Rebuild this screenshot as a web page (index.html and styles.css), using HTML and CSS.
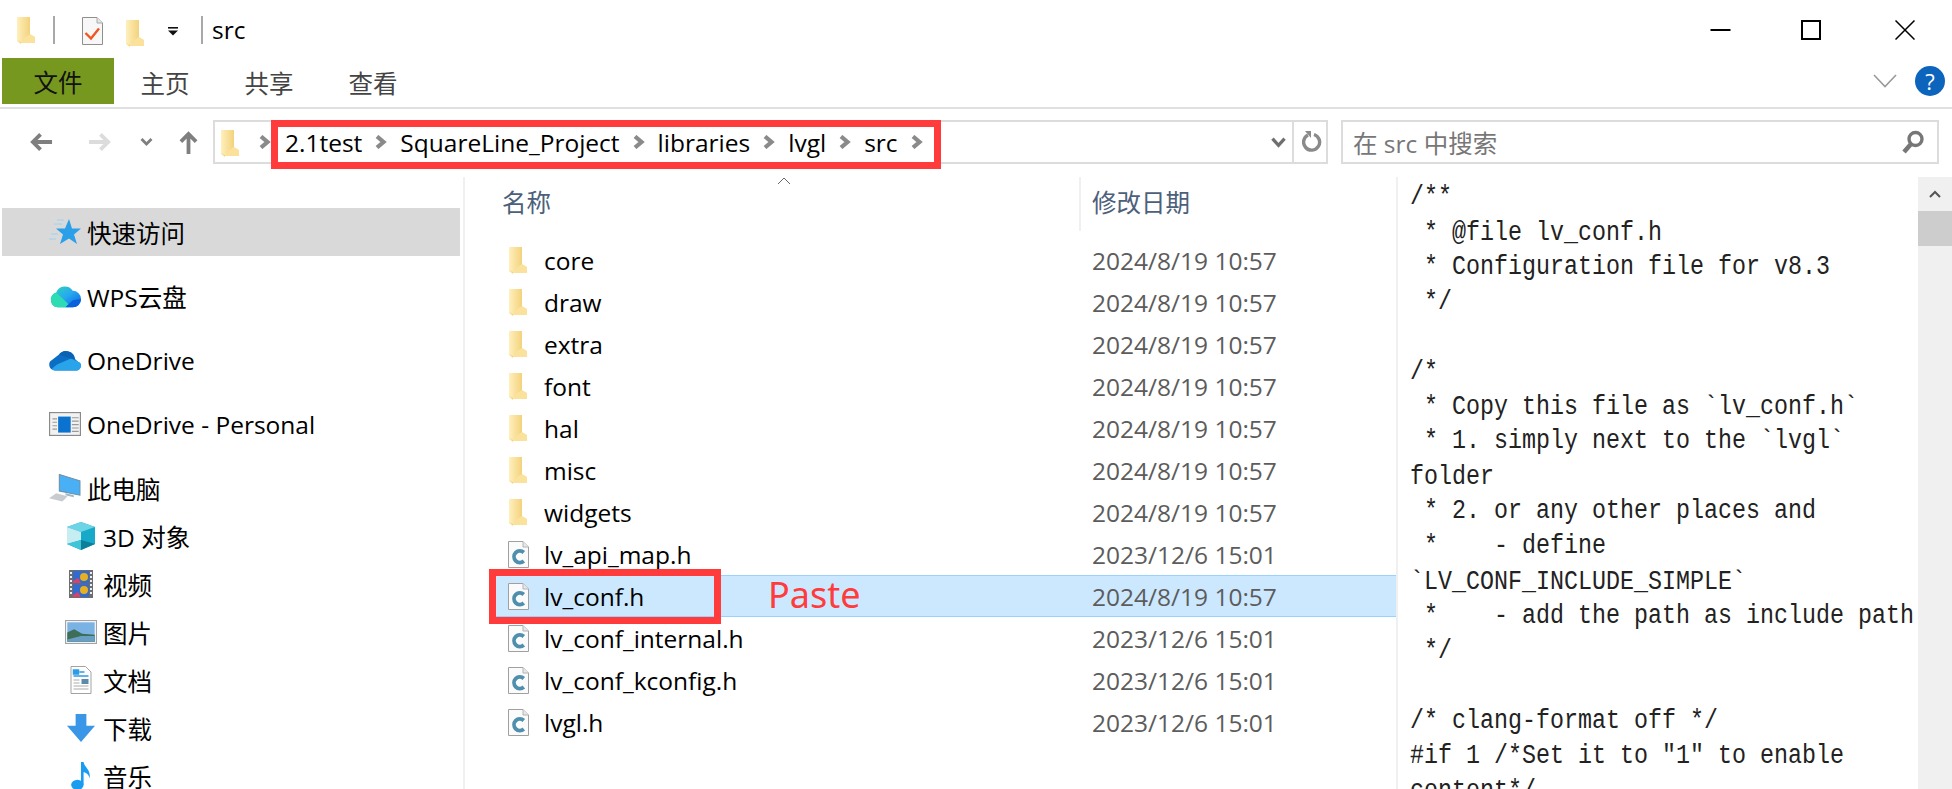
FILE: index.html
```html
<!DOCTYPE html>
<html lang="zh">
<head>
<meta charset="utf-8">
<title>src</title>
<link rel="stylesheet" href="styles.css">
</head>
<body>
<svg class="defs" width="0" height="0" aria-hidden="true">
  <defs>
    <linearGradient id="fg" x1="0" y1="0" x2="1" y2="1">
      <stop offset="0" stop-color="#f5d67e"/><stop offset="1" stop-color="#fde9a8"/>
    </linearGradient>
    <linearGradient id="fl" x1="0" y1="0" x2="1" y2="0">
      <stop offset="0" stop-color="#fff0bd"/><stop offset="1" stop-color="#f3d27c"/>
    </linearGradient>
    <linearGradient id="wps" x1="0" y1="0" x2="1" y2="1">
      <stop offset="0" stop-color="#2fd9b0"/><stop offset="0.5" stop-color="#27a8f0"/><stop offset="1" stop-color="#0a5fdc"/>
    </linearGradient>
    <symbol id="folder" viewBox="0 0 18 27">
      <path d="M0 0H12L13 2V18L18 20V26H4L0 24Z" fill="url(#fg)"/>
      <path d="M0 1L4 5V27L0 24Z" fill="url(#fl)"/>
      <path d="M4 6L12 1V20H18V26H4Z" fill="#f5d988"/>
      <path d="M0 0H13V18L5 22V26L0 22Z" fill="url(#fl)"/>
      <path d="M13 17L18 20V26H5V22Z" fill="#fae29c"/>
    </symbol>
    <symbol id="cfile" viewBox="0 0 21 27">
      <path d="M.5.5H15L20.500 6V26.500H.5Z" fill="#fbfbfb" stroke="#a0a0a0"/>
      <path d="M15 .5V6H20.500" fill="#e8e8e8" stroke="#b4b4b4"/>
      <path d="M15.800 11.500A5.800 5.800 0 1 0 15.800 20" fill="none" stroke="#4f8fae" stroke-width="3.800"/>
    </symbol>
    <symbol id="chev" viewBox="0 0 12 14">
      <path d="M2 1.500L8.500 7L2 12.500" fill="none" stroke="#8a8a8a" stroke-width="4.200"/>
    </symbol>
  </defs>
</svg>

<div class="app">
  <header class="titlebar">
    <div class="qat">
      <svg class="ico-folder qat-first"><use href="#folder"/></svg>
      <span class="vsep sep-a"></span>
      <svg class="qat-doc" viewBox="0 0 21 28"><path d="M.5.5H15L20.500 6V27.500H.5Z" fill="#f7f7f7" stroke="#8f8f8f"/><path d="M15 .5V6H20.500" fill="#e6e6e6" stroke="#aaa"/><path d="M3.500 16L9 21.500L17 11.500" fill="none" stroke="#f0561d" stroke-width="2.400"/></svg>
      <svg class="ico-folder qat-second"><use href="#folder"/></svg>
      <svg class="qat-drop" viewBox="0 0 12 9"><rect x="1" y="0" width="10" height="1.600" fill="#111"/><path d="M1 3.500H11L6 8.500Z" fill="#111"/></svg>
      <span class="vsep sep-b"></span>
      <span class="title">src</span>
    </div>
    <div class="winbtns">
      <svg class="win-min" viewBox="0 0 20 4"><rect width="20" height="2" y="1" fill="#000"/></svg>
      <svg class="win-max" viewBox="0 0 20 20"><rect x="1" y="1" width="18" height="18" fill="none" stroke="#000" stroke-width="2"/></svg>
      <svg class="win-close" viewBox="0 0 20 20"><path d="M.5.5L19.500 19.500M19.500.5L.5 19.500" stroke="#000" stroke-width="1.500"/></svg>
    </div>
  </header>

  <nav class="ribbon">
    <span class="tab tab-file">文件</span>
    <span class="tab">主页</span>
    <span class="tab">共享</span>
    <span class="tab">查看</span>
    <span class="ribbon-right">
      <svg class="rib-chev" viewBox="0 0 24 14"><path d="M1 1L12 12.500L23 1" fill="none" stroke="#9a9a9a" stroke-width="1.600"/></svg>
      <span class="help">?</span>
    </span>
  </nav>

  <div class="addr-row">
    <div class="nav-btns">
      <svg class="nav-arrow" viewBox="0 0 24 20"><path d="M11 2L3 10L11 18M3 10H23" fill="none" stroke="#7f7f7f" stroke-width="4"/></svg>
      <svg class="nav-arrow nav-fwd" viewBox="0 0 24 20"><path d="M13 2L21 10L13 18M21 10H1" fill="none" stroke="#dcdcdc" stroke-width="4"/></svg>
      <svg class="nav-down" viewBox="0 0 12 8"><path d="M1 1L6 6L11 1" fill="none" stroke="#7f7f7f" stroke-width="2.800"/></svg>
      <svg class="nav-up" viewBox="0 0 20 24"><path d="M2 11L10 3L18 11M10 3V24" fill="none" stroke="#7f7f7f" stroke-width="4"/></svg>
    </div>
    <div class="addr">
      <svg class="ico-folder addr-folder"><use href="#folder"/></svg>
      <svg class="crumb-chev crumb-first"><use href="#chev"/></svg>
      <span class="crumb">2.1test</span><svg class="crumb-chev"><use href="#chev"/></svg>
      <span class="crumb">SquareLine_Project</span><svg class="crumb-chev"><use href="#chev"/></svg>
      <span class="crumb">libraries</span><svg class="crumb-chev"><use href="#chev"/></svg>
      <span class="crumb">lvgl</span><svg class="crumb-chev"><use href="#chev"/></svg>
      <span class="crumb">src</span><svg class="crumb-chev"><use href="#chev"/></svg>
      <span class="addr-end">
        <svg class="addr-down" viewBox="0 0 14 10"><path d="M1.500 1.500L7 7.500L12.500 1.500" fill="none" stroke="#6f6f6f" stroke-width="3"/></svg>
        <span class="addr-refresh">
          <svg viewBox="0 0 20 24"><path d="M12 4.500A8 8 0 1 1 6 5" fill="none" stroke="#8a8a8a" stroke-width="3.400"/><path d="M3 1H9V8Z" fill="#8a8a8a"/></svg>
        </span>
      </span>
    </div>
    <div class="search">
      <span class="search-text">在 src 中搜索</span>
      <svg class="search-ico" viewBox="0 0 24 24"><circle cx="14.500" cy="9" r="6.500" fill="none" stroke="#777" stroke-width="3.400"/><path d="M10 14L3 22" stroke="#777" stroke-width="4.500"/></svg>
    </div>
  </div>

  <main class="main">
    <aside class="sidebar">
      <div class="nav-item selected">
        <span class="nav-ico"><svg viewBox="0 0 32 26"><path d="M20 0L23 9.500L32 9.500L25 15.500L28 25L20 19.500L11 25L14 15.500L7 9.500L16 9.500Z" fill="#2b9fe8"/><path d="M0 20H7M2 15H9M5 5H13M8 1H15" stroke="#9bd2f4" stroke-width="1"/></svg></span>快速访问
      </div>
      <div class="nav-item">
        <span class="nav-ico"><svg viewBox="0 0 31 22"><path d="M8 22A7.500 7.500 0 0 1 7 7.500A9 9 0 0 1 23 6A8 8 0 0 1 31 14A8 8 0 0 1 23 22Z" fill="url(#wps)"/><path d="M7 7.500L19 19L16 22H8A7.500 7.500 0 0 1 7 7.500Z" fill="#2edcb4"/><path d="M16 22L23 15L31 14A8 8 0 0 1 23 22Z" fill="#0a5fdc"/></svg></span>WPS云盘
      </div>
      <div class="nav-item">
        <span class="nav-ico"><svg viewBox="0 0 32 21"><path d="M6 21A6 6 0 0 1 1 12L10 5A9 9 0 0 1 26 9.500L32 15A6 6 0 0 1 28 21Z" fill="#0b6ec4"/><path d="M6 21H28A5 5 0 0 0 31 13L22 9L8 15L3 19A5 5 0 0 0 6 21Z" fill="#29a4ea"/><path d="M10 5A9 9 0 0 1 26 9.500L22 9Z" fill="#0a62b4"/></svg></span>OneDrive
      </div>
      <div class="nav-item">
        <span class="nav-ico"><svg viewBox="0 0 28 21"><rect x=".5" y=".5" width="27" height="20" fill="#f2f2f2" stroke="#8a8a8a"/><rect x="8" y="4" width="11" height="14" fill="#0a72cf"/><path d="M3 6H7M3 9H7M3 12H7M3 15H7M20 5H26M20 8H26M20 11H26M20 14H26M20 17H26" stroke="#9a9a9a" stroke-width="1"/></svg></span>OneDrive - Personal
      </div>
      <div class="nav-item nav-pc">
        <span class="nav-ico"><svg viewBox="0 0 31 26"><path d="M10 0L30 6V20L10 16Z" fill="#49b0f5" stroke="#6d8ea6"/><path d="M16 18L24 20V22L16 20Z" fill="#9fb6c4"/><path d="M0 23L7 18L18 21L13 26Z" fill="#c8ccd0"/></svg></span>此电脑
      </div>
      <div class="nav-item sub">
        <span class="nav-ico"><svg viewBox="0 0 28 28"><path d="M14 0L28 5V22L14 28L0 22V5Z" fill="#16a9c9"/><path d="M0 5L14 0L28 5L14 10Z" fill="#6cd4e4"/><path d="M0 5L14 10V18L0 22Z" fill="#c6edf2"/><path d="M14 18L28 22L14 28Z" fill="#0d7f99"/><path d="M14 18L0 22L14 28Z" fill="#3fc5d8"/></svg></span>3D 对象
      </div>
      <div class="nav-item sub">
        <span class="nav-ico"><svg viewBox="0 0 24 28"><rect width="24" height="28" fill="#6d6d6d"/><rect x="4" y="1" width="16" height="12.500" fill="#2f6bd0"/><rect x="4" y="14.500" width="16" height="12.500" fill="#2f6bd0"/><circle cx="15" cy="7" r="4" fill="#e8b020"/><circle cx="15" cy="20" r="4" fill="#e8b020"/><path d="M4 11L9 8L12 13H4ZM4 25L9 22L12 27H4Z" fill="#d9406a"/><path d="M1 3H3M1 7H3M1 11H3M1 15H3M1 19H3M1 23H3M21 3H23M21 7H23M21 11H23M21 15H23M21 19H23M21 23H23" stroke="#eee" stroke-width="2"/></svg></span>视频
      </div>
      <div class="nav-item sub">
        <span class="nav-ico"><svg viewBox="0 0 28 21"><rect x=".5" y=".5" width="27" height="20" fill="#fff" stroke="#a3a3a3"/><rect x="2" y="2" width="24" height="17" fill="#7ab2e4"/><path d="M2 11L8 8L15 12L26 13V19H2Z" fill="#3e6d58"/><path d="M14 14H26V19H2V17Z" fill="#6a9fc4"/></svg></span>图片
      </div>
      <div class="nav-item sub">
        <span class="nav-ico"><svg viewBox="0 0 21 28"><path d="M.5.5H15L20.500 6V27.500H.5Z" fill="#fff" stroke="#a3a3a3"/><path d="M3 4H8V8H3ZM9 6H14M3 10H18" stroke="#2e9be6" stroke-width="1.500" fill="#2e9be6"/><rect x="11" y="13" width="7" height="5" fill="#5d8aa8"/><path d="M3 14H9M3 17H9M3 20H18M3 23H18" stroke="#aaa" stroke-width="1"/></svg></span>文档
      </div>
      <div class="nav-item sub">
        <span class="nav-ico"><svg viewBox="0 0 26 26"><path d="M8 0H18V11H26L13 26L0 11H8Z" fill="#3a96e6"/></svg></span>下载
      </div>
      <div class="nav-item sub">
        <span class="nav-ico"><svg viewBox="0 0 19 27"><ellipse cx="6" cy="22" rx="6" ry="5" fill="#1a9cf0"/><path d="M9.500 0H12C12.500 5 19 7 18 16C17 12 14 10 12 10V22H9.500Z" fill="#1a9cf0"/></svg></span>音乐
      </div>
    </aside>

    <section class="files">
      <div class="file-head">
        <span class="col-name">名称</span>
        <span class="col-date">修改日期</span>
        <svg class="sort-up" viewBox="0 0 14 8"><path d="M1 7L7 1L13 7" fill="none" stroke="#666" stroke-width="1"/></svg>
      </div>
      <ul class="file-rows">
        <li class="row"><svg class="ico-folder"><use href="#folder"/></svg><span class="fname">core</span><span class="fdate">2024/8/19 10:57</span></li>
        <li class="row"><svg class="ico-folder"><use href="#folder"/></svg><span class="fname">draw</span><span class="fdate">2024/8/19 10:57</span></li>
        <li class="row"><svg class="ico-folder"><use href="#folder"/></svg><span class="fname">extra</span><span class="fdate">2024/8/19 10:57</span></li>
        <li class="row"><svg class="ico-folder"><use href="#folder"/></svg><span class="fname">font</span><span class="fdate">2024/8/19 10:57</span></li>
        <li class="row"><svg class="ico-folder"><use href="#folder"/></svg><span class="fname">hal</span><span class="fdate">2024/8/19 10:57</span></li>
        <li class="row"><svg class="ico-folder"><use href="#folder"/></svg><span class="fname">misc</span><span class="fdate">2024/8/19 10:57</span></li>
        <li class="row"><svg class="ico-folder"><use href="#folder"/></svg><span class="fname">widgets</span><span class="fdate">2024/8/19 10:57</span></li>
        <li class="row"><svg class="ico-file"><use href="#cfile"/></svg><span class="fname">lv_api_map.h</span><span class="fdate">2023/12/6 15:01</span></li>
        <li class="row row-sel"><svg class="ico-file"><use href="#cfile"/></svg><span class="fname">lv_conf.h</span><span class="fdate">2024/8/19 10:57</span></li>
        <li class="row"><svg class="ico-file"><use href="#cfile"/></svg><span class="fname">lv_conf_internal.h</span><span class="fdate">2023/12/6 15:01</span></li>
        <li class="row"><svg class="ico-file"><use href="#cfile"/></svg><span class="fname">lv_conf_kconfig.h</span><span class="fdate">2023/12/6 15:01</span></li>
        <li class="row"><svg class="ico-file"><use href="#cfile"/></svg><span class="fname">lvgl.h</span><span class="fdate">2023/12/6 15:01</span></li>
      </ul>
    </section>

    <section class="preview">
      <pre class="code">/**
 * @file lv_conf.h
 * Configuration file for v8.3
 */

/*
 * Copy this file as `lv_conf.h`
 * 1. simply next to the `lvgl`
folder
 * 2. or any other places and
 *    - define
`LV_CONF_INCLUDE_SIMPLE`
 *    - add the path as include path
 */

/* clang-format off */
#if 1 /*Set it to "1" to enable
content*/</pre>
      <div class="scrollbar">
        <div class="sb-btn"><svg viewBox="0 0 12 8"><path d="M1 7L6 2L11 7" fill="none" stroke="#555" stroke-width="2"/></svg></div>
        <div class="sb-thumb"></div>
      </div>
    </section>
  </main>

  <div class="mark mark-addr"></div>
  <div class="mark mark-file"></div>
  <div class="paste">Paste</div>
</div>
</body>
</html>
```
FILE: styles.css
```css
* { box-sizing: border-box; }
html, body { margin: 0; padding: 0; background: #fff; }
body { font-family: "Open Sans", "Noto Sans CJK SC", sans-serif; color: #000; overflow: hidden; }
.defs { position: absolute; }
svg { display: block; flex: none; }

.app { position: relative; width: 1952px; height: 789px; display: flex; flex-direction: column; overflow: hidden; }

/* title bar */
.titlebar { height: 58px; display: flex; justify-content: space-between; align-items: center; flex: none; }
.qat { display: flex; align-items: center; padding-left: 17px; height: 100%; }
.ico-folder { width: 18px; height: 27px; }
.qat-first { margin-top: 2px; }
.vsep { width: 2px; height: 28px; background: #a8a8a8; display: block; margin-top: 2px; }
.sep-a { margin-left: 18px; }
.qat-doc { width: 21px; height: 28px; margin-left: 27px; margin-top: 4px; }
.qat-second { margin-left: 23px; margin-top: 8px; }
.qat-drop { width: 12px; height: 9px; margin-left: 23px; margin-top: 4px; }
.sep-b { margin-left: 22px; }
.title { font-size: 24.5px; margin-left: 9px; margin-top: 0; }
.winbtns { display: flex; align-items: center; margin-top: 2px; }
.win-min { width: 21px; height: 4px; }
.win-max { width: 20px; height: 20px; margin-left: 70px; }
.win-close { width: 20px; height: 20px; margin-left: 74px; margin-right: 37px; }

/* ribbon */
.ribbon { height: 51px; display: flex; flex: none; border-bottom: 2px solid #e0e0e0; padding-left: 2px; padding-bottom: 3px; font-size: 24.5px; color: #444; align-items: stretch; }
.tab { width: 104px; display: flex; align-items: center; justify-content: center; padding-top: 2px; }
.tab-file { width: 112px; background: #76981f; color: #111; padding-top: 0; margin-right: -1px; }
.ribbon-right { margin-left: auto; display: flex; align-items: center; padding-right: 7px; }
.rib-chev { width: 24px; height: 14px; margin-right: 18px; }
.help { width: 30px; height: 30px; border-radius: 50%; background: #0d64bd; color: #fff; font-size: 22px; display: flex; align-items: center; justify-content: center; }

/* address row */
.addr-row { height: 44px; margin-top: 11px; display: flex; flex: none; }
.nav-btns { width: 213px; display: flex; align-items: center; padding-left: 30px; flex: none; }
.nav-arrow { width: 23px; height: 20px; }
.nav-fwd { margin-left: 35px; }
.nav-down { width: 13px; height: 8px; margin-left: 29px; }
.nav-up { width: 19px; height: 23px; margin-left: 26px; }
.addr { width: 1115px; border: 2px solid #dcdcdc; display: flex; align-items: center; font-size: 24.5px; padding-left: 6px; flex: none; }
.addr-folder { margin-top: 2px; }
.crumb { display: block; }
.crumb-chev { width: 12px; height: 14px; margin: 0 13px; }
.crumb-first { margin: 0 14px 0 20px; }
.addr-end { margin-left: auto; display: flex; align-items: center; height: 100%; }
.addr-down { width: 17px; height: 11px; margin-right: 5px; }
.addr-refresh { width: 34px; height: 100%; border-left: 2px solid #dcdcdc; display: flex; align-items: center; justify-content: center; padding-left: 3px; }
.addr-refresh svg { width: 20px; height: 24px; }
.search { width: 598px; margin-left: 13px; border: 2px solid #dcdcdc; display: flex; align-items: center; justify-content: space-between; padding: 0 12px 0 10px; font-size: 24.5px; color: #777; flex: none; }
.search-ico { width: 24px; height: 24px; }

/* main */
.main { flex: 1; min-height: 0; display: flex; margin-top: 13px; overflow: hidden; }
.sidebar { width: 465px; flex: none; border-right: 2px solid #f0f0f0; padding-top: 31px; padding-left: 2px; font-size: 24.5px; }
.nav-item { height: 48px; margin-bottom: 16px; display: flex; align-items: center; padding-left: 47px; margin-right: 3px; white-space: nowrap; }
.nav-item.selected { background: #d9d9d9; }
.nav-item.nav-pc { margin-bottom: 0; }
.nav-item.sub { margin-bottom: 0; padding-left: 63px; }
.nav-ico { width: 38px; height: 32px; display: flex; align-items: center; justify-content: flex-start; flex: none; }
.nav-ico svg { width: 32px; height: 28px; }

/* files */
.files { width: 933px; flex: none; border-right: 2px solid #f0f0f0; font-size: 24.5px; position: relative; }
.file-head { height: 62px; position: relative; display: flex; color: #4c607a; }
.col-name { margin-left: 37px; width: 579px; height: 54px; padding-bottom: 5px; display: flex; align-items: center; }
.col-date { border-left: 2px solid #f0f0f0; padding-left: 11px; height: 54px; padding-bottom: 5px; margin-left: -2px; display: flex; align-items: center; }
.sort-up { position: absolute; left: 312px; top: 0; width: 14px; height: 8px; }
.file-rows { list-style: none; margin: 0; padding: 0 0 0 27px; }
.row { height: 42px; display: flex; align-items: center; padding-left: 17px; border: 1px solid transparent; border-width: 1px 0 1px 0; }
.row-sel { background: #cce8ff; border-color: #99d1ff; }
.row .ico-folder { margin-right: 17px; }
.ico-file { width: 21px; height: 27px; }
.row .ico-file { margin-right: 15px; margin-left: -1px; }
.fname { width: 548px; display: block; }
.fdate { color: #5c5c5c; }

/* preview */
.preview { flex: 1; display: flex; justify-content: space-between; min-width: 0; }
.code { margin: 0; padding: 3px 0 0 12px; font-family: "Liberation Mono", monospace; font-size: 23.33px; line-height: 29.6px; color: #222; overflow: visible; transform: scaleY(1.18); transform-origin: 0 0; }
.scrollbar { width: 34px; background: #f0f0f0; flex: none; position: relative; }
.sb-btn { height: 34px; display: flex; align-items: center; justify-content: center; }
.sb-btn svg { width: 12px; height: 8px; }
.sb-thumb { height: 35px; background: #cdcdcd; }

/* annotations */
.mark { position: absolute; border: 7px solid #ff3b3b; }
.mark-addr { left: 271px; top: 120px; width: 670px; height: 49px; }
.mark-file { left: 489px; top: 569px; width: 232px; height: 55px; }
.paste { position: absolute; left: 768px; top: 571px; font-family: "Noto Sans", sans-serif; font-size: 36px; line-height: 48px; color: #ff3b3b; }
```
